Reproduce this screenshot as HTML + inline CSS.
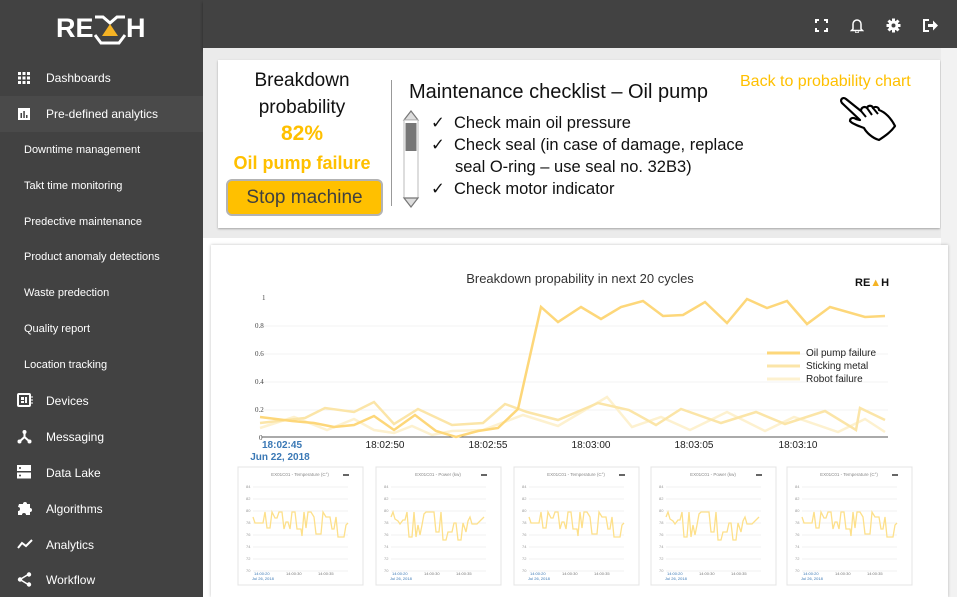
<!DOCTYPE html>
<html><head><meta charset="utf-8"><style>
*{margin:0;padding:0;box-sizing:border-box}
body{width:957px;height:597px;overflow:hidden;background:#fff;font-family:"Liberation Sans",sans-serif;position:relative}
.sb{position:absolute;left:0;top:0;width:203px;height:597px;background:#424242;color:#fff}
.top{position:absolute;left:203px;top:0;width:754px;height:48px;background:#424242;box-shadow:0 2px 3px rgba(0,0,0,.4)}
.it{position:absolute;left:46px;font-size:12px;color:#fff}
.sub{position:absolute;left:24px;font-size:11px;color:#fff}
.ic{position:absolute;left:17px}
.abs{position:absolute}
.cal{font-family:"Liberation Sans",sans-serif}
</style></head><body>
<div class="sb">
  <div class="abs" style="left:56px;top:13px;font-size:27px;font-weight:bold;line-height:30px">RE</div>
  <div class="abs" style="left:126px;top:13px;font-size:27px;font-weight:bold;line-height:30px">H</div>
  <svg class="abs" style="left:94px;top:14px" width="32" height="32" viewBox="0 0 32 32"><path d="M1 3 L9 3 L16 9 L23 3 L31 3" stroke="#fff" stroke-width="3" fill="none"/><path d="M1 21 L7 29 L25 29 L31 21" stroke="#fff" stroke-width="3" fill="none"/><path d="M8 22 L16 10 L24 22Z" fill="#f5b324"/></svg>
  <div class="abs" style="left:0;top:96px;width:203px;height:36px;background:#4a4a4a"></div>
  <svg class="ic" style="top:71px" width="14" height="14"><g fill="#fff"><rect x="1" y="1" width="3" height="3"/><rect x="5.5" y="1" width="3" height="3"/><rect x="10" y="1" width="3" height="3"/><rect x="1" y="5.5" width="3" height="3"/><rect x="5.5" y="5.5" width="3" height="3"/><rect x="10" y="5.5" width="3" height="3"/><rect x="1" y="10" width="3" height="3"/><rect x="5.5" y="10" width="3" height="3"/><rect x="10" y="10" width="3" height="3"/></g></svg>
  <div class="it" style="top:71px">Dashboards</div>
  <svg class="ic" style="top:107px" width="14" height="14"><rect x="1" y="1" width="12" height="12" fill="#fff"/><g fill="#424242"><rect x="3.5" y="6" width="1.5" height="5"/><rect x="6.3" y="4" width="1.5" height="7"/><rect x="9" y="8" width="1.5" height="3"/></g></svg>
  <div class="it" style="top:107px">Pre-defined analytics</div>
  <div class="sub" style="top:144px">Downtime management</div>
  <div class="sub" style="top:180px">Takt time monitoring</div>
  <div class="sub" style="top:216px">Predective maintenance</div>
  <div class="sub" style="top:251px">Product anomaly detections</div>
  <div class="sub" style="top:287px">Waste predection</div>
  <div class="sub" style="top:323px">Quality report</div>
  <div class="sub" style="top:359px">Location tracking</div>
  <svg class="ic" style="top:393px" width="16" height="14"><rect x="1" y="1" width="12" height="12" rx="1" fill="none" stroke="#fff" stroke-width="2"/><rect x="4" y="4" width="3" height="3" fill="#fff"/><rect x="8" y="4" width="2" height="6" fill="#fff"/><rect x="4" y="8" width="3" height="2" fill="#fff"/><path d="M14 4h2M14 7h2M14 10h2" stroke="#fff"/></svg>
  <div class="it" style="top:394px">Devices</div>
  <svg class="ic" style="top:429px" width="15" height="15"><path d="M7.5 2V8L2 13M7.5 8L13 13" stroke="#fff" stroke-width="2" fill="none"/><circle cx="7.5" cy="3" r="2" fill="#fff"/><circle cx="2.5" cy="12.5" r="2" fill="#fff"/><circle cx="12.5" cy="12.5" r="2" fill="#fff"/></svg>
  <div class="it" style="top:430px">Messaging</div>
  <svg class="ic" style="top:465px" width="14" height="14"><rect x="0" y="0" width="14" height="6" fill="#fff"/><rect x="0" y="7.5" width="14" height="6" fill="#fff"/><circle cx="3" cy="3" r="1" fill="#424242"/><circle cx="3" cy="10.5" r="1" fill="#424242"/></svg>
  <div class="it" style="top:466px">Data Lake</div>
  <svg class="ic" style="top:500px" width="16" height="16"><path d="M2 4h4a2 2 0 1 1 4 0h3v4a2 2 0 1 1 0 4v3H9a2 2 0 1 0-4 0H1v-4a2 2 0 1 0 0-4z" fill="#fff"/></svg>
  <div class="it" style="top:502px">Algorithms</div>
  <svg class="ic" style="top:538px" width="16" height="12"><path d="M1 10L5 5L9 8L15 2" stroke="#fff" stroke-width="2" fill="none"/></svg>
  <div class="it" style="top:538px">Analytics</div>
  <svg class="ic" style="top:572px" width="15" height="15"><path d="M12 2L3 7.5L12 13" stroke="#fff" stroke-width="1.5" fill="none"/><circle cx="12" cy="2.5" r="2.2" fill="#fff"/><circle cx="3" cy="7.5" r="2.2" fill="#fff"/><circle cx="12" cy="12.5" r="2.2" fill="#fff"/></svg>
  <div class="it" style="top:573px">Workflow</div>
</div>
<div class="top">
  <svg class="abs" style="left:612px;top:19px" width="13" height="13"><path d="M1 4V1h3M9 1h3v3M12 9v3H9M4 12H1V9" stroke="#fff" stroke-width="2" fill="none"/></svg>
  <svg class="abs" style="left:647px;top:18px" width="14" height="15"><path d="M3 11V6a4 4 0 0 1 8 0v5l1.5 1.5h-11z" stroke="#fff" stroke-width="1.5" fill="none"/><path d="M5.5 13.5a1.5 1.5 0 0 0 3 0" stroke="#fff" fill="none"/></svg>
  <svg class="abs" style="left:683px;top:18px" width="15" height="15" viewBox="0 0 15 15"><circle cx="7.5" cy="7.5" r="5" fill="#fff"/><g stroke="#fff" stroke-width="3"><path d="M7.5 0.5v14M0.5 7.5h14M2.5 2.5l10 10M12.5 2.5l-10 10"/></g><circle cx="7.5" cy="7.5" r="2" fill="#424242"/></svg>
  <svg class="abs" style="left:720px;top:19px" width="16" height="13"><path d="M6 1H1v11h5" stroke="#fff" stroke-width="2" fill="none"/><path d="M5 5h5V1.5l5 5-5 5V8H5z" fill="#fff"/></svg>
</div>
<div class="abs" style="left:203px;top:48px;width:754px;height:190px;background:#ebebeb"></div>
<div class="abs" style="left:218px;top:60px;width:722px;height:168px;background:#fff;box-shadow:0 1px 2px rgba(0,0,0,.3)"></div>
<div class="abs" style="left:941px;top:48px;width:16px;height:549px;background:#f2f2f2"></div>
<div class="abs cal" style="left:218px;top:67px;width:168px;text-align:center;font-size:19px;line-height:27px;color:#111">Breakdown<br>probability</div>
<div class="abs" style="left:218px;top:122px;width:168px;text-align:center;font-size:21px;font-weight:bold;color:#ffc000">82%</div>
<div class="abs" style="left:218px;top:153px;width:168px;text-align:center;font-size:18px;font-weight:bold;color:#ffc000">Oil pump failure</div>
<div class="abs" style="left:226px;top:179px;width:157px;height:37px;background:#ffc000;border:2px solid #b3b3b3;border-radius:6px;text-align:center;font-size:19px;line-height:33px;color:#404040">Stop machine</div>
<div class="abs" style="left:391px;top:80px;width:1px;height:126px;background:#999"></div>
<div class="abs" style="left:409px;top:81px;font-size:20px;color:#111">Maintenance checklist – Oil pump</div>
<svg class="abs" style="left:402px;top:110px" width="18" height="100"><path d="M2 10L9 1L16 10Z" fill="#ddd" stroke="#777" stroke-width="1.2"/><rect x="2" y="10" width="14" height="78" fill="#fff" stroke="#bbb"/><rect x="3.5" y="13" width="11" height="28" fill="#777"/><path d="M2 88L9 97L16 88Z" fill="#ddd" stroke="#777" stroke-width="1.2"/></svg>
<div class="abs" style="left:431px;top:112px;font-size:16.5px;line-height:22px;color:#111">
<div>✓&nbsp; Check main oil pressure</div>
<div>✓&nbsp; Check seal (in case of damage, replace</div>
<div style="padding-left:24px">seal O-ring – use seal no. 32B3)</div>
<div>✓&nbsp; Check motor indicator</div>
</div>
<div class="abs" style="left:740px;top:73px;font-size:16px;color:#ffc000">Back to probability chart</div>
<svg class="abs" style="left:835px;top:95px" width="66" height="50" viewBox="0 0 66 50"><path d="M8 9c-4-3-1-8 3-5l15 12c0-4 4-5 6-3c1-3 5-3 6 0c2-2 6-1 6 2c6 2 12 8 16 16c-4 6-10 10-16 14c-7-2-13-8-15-12c-5-2-12-4-14-7c0-3 3-4 6-2l4 1z" fill="#fff" stroke="#000" stroke-width="2.2" stroke-linejoin="round"/><path d="M26 16l5 6M32 13l5 7M38 13l5 6" stroke="#000" stroke-width="2" fill="none"/></svg>
<div class="abs" style="left:211px;top:245px;width:737px;height:352px;background:#fff;box-shadow:0 0 3px rgba(0,0,0,.25)"></div>
<svg class="abs" style="left:0;top:0" width="957" height="597">
<text x="580" y="283" font-size="13" text-anchor="middle" fill="#333" font-family="Liberation Sans">Breakdown propability in next 20 cycles</text>
<text x="855" y="286" font-size="11" font-weight="bold" fill="#111" font-family="Liberation Sans">RE<tspan fill="#f5b324">▲</tspan>H</text>
<g stroke="#f3f3f3"><path d="M262 326H888M262 354H888M262 382H888M262 410H888"/></g>
<path d="M262 437H888" stroke="#555" stroke-width="1"/>
<g font-size="7" fill="#444" font-family="Liberation Serif"><text x="262" y="300">1</text><text x="255" y="328">0.8</text><text x="255" y="356">0.6</text><text x="255" y="384">0.4</text><text x="255" y="412">0.2</text><text x="259" y="440">0</text></g>
<g font-size="10" fill="#222" font-family="Liberation Sans" text-anchor="middle"><text x="385" y="448">18:02:50</text><text x="488" y="448">18:02:55</text><text x="591" y="448">18:03:00</text><text x="694" y="448">18:03:05</text><text x="798" y="448">18:03:10</text></g>
<text x="282" y="448" font-size="10" fill="#3a78b5" font-weight="bold" text-anchor="middle">18:02:45</text>
<text x="280" y="460" font-size="10" fill="#3a78b5" font-weight="bold" text-anchor="middle">Jun 22, 2018</text>
<polyline fill="none" stroke="#fdf1cf" stroke-width="2.5" points="260,428 294,417 327,430 354,419 374,430 394,433 412,426 432,435 452,431 483,430 523,415 558,426 607,397 632,427 661,417 690,430 727,412 765,431 794,417 838,432 865,419 885,432"/>
<polyline fill="none" stroke="#fbe5a8" stroke-width="2.5" points="260,423 305,418 325,408 354,412 374,402 394,424 418,409 452,425 483,423 505,404 527,412 558,420 598,403 629,410 656,425 681,409 721,423 756,412 785,424 825,411 856,430 860,408 885,420"/>
<polyline fill="none" stroke="#fdd77a" stroke-width="2.5" points="260,417 292,421 314,423 334,427 354,425 374,416 394,430 415,415 436,431 456,437 478,431 498,428 518,409 541,307 558,322 581,307 601,319 621,307 643,301 663,316 683,315 705,302 727,323 747,299 767,308 787,301 807,324 830,307 865,317 885,316"/>
<path d="M767 353H800" stroke="#fdd77a" stroke-width="3"/><path d="M767 366H800" stroke="#fbe5a8" stroke-width="3"/><path d="M767 379H800" stroke="#fdf1cf" stroke-width="3"/>
<g font-size="10" fill="#222" font-family="Liberation Sans"><text x="806" y="356">Oil pump failure</text><text x="806" y="369">Sticking metal</text><text x="806" y="382">Robot failure</text></g>
<defs><g id="card">
<rect x="0" y="0" width="125" height="118" fill="#fff" stroke="#e4e4e4"/>
<g stroke="#f2f2f2"><path d="M15 20H110M15 32H110M15 44H110M15 56H110M15 68H110M15 80H110M15 92H110M15 104H110"/></g>
<g font-size="4" fill="#999"><text x="8" y="21">84</text><text x="8" y="33">82</text><text x="8" y="45">80</text><text x="8" y="57">78</text><text x="8" y="69">76</text><text x="8" y="81">74</text><text x="8" y="93">72</text><text x="8" y="105">70</text></g>
<g font-size="4" fill="#3a78b5"><text x="16" y="108">14:00:20</text><text x="14" y="113">Jul 26, 2018</text></g>
<g font-size="4" fill="#777"><text x="48" y="108">14:00:30</text><text x="80" y="108">14:00:35</text></g>
<rect x="105" y="7" width="6" height="2" fill="#666"/>
</g></defs>
<g transform="translate(238,467)"><use href="#card"/><text x="62" y="9" font-size="4.5" fill="#888" text-anchor="middle">EX01C01 - Temperature (C°)</text><polyline fill="none" stroke="#fde08a" stroke-width="1.3" points="15,50 17,56 25,56 27,45 29,61 32,61 34,45 37,51 39,51 41,45 44,45 46,62 48,55 50,55 52,62 54,45 57,45 59,62 63,62 64,69 66,45 68,61 70,45 73,45 76,50 78,67 83,67 85,45 88,50 92,50 94,62 96,62 98,50 100,70 104,70 106,70 108,58 110,56"/></g>
<g transform="translate(376,467)"><use href="#card"/><text x="62" y="9" font-size="4.5" fill="#888" text-anchor="middle">EX01C01 - Power (kw)</text><polyline fill="none" stroke="#fde08a" stroke-width="1.3" points="15,50 17,45 19,52 22,54 24,57 27,53 29,53 31,45 33,70 36,70 38,45 40,70 42,58 44,68 46,58 48,47 50,45 58,45 60,65 63,65 65,45 67,73 70,73 72,65 76,65 78,56 80,56 82,73 85,73 87,56 90,65 92,54 94,50 96,57 101,57 105,53 108,50"/></g>
<g transform="translate(514,467)"><use href="#card"/><text x="62" y="9" font-size="4.5" fill="#888" text-anchor="middle">EX01C01 - Temperature (C°)</text><polyline fill="none" stroke="#fde08a" stroke-width="1.3" points="15,50 17,56 25,56 27,45 29,61 32,61 34,45 37,51 39,51 41,45 44,45 46,62 48,55 50,55 52,62 54,45 57,45 59,62 63,62 64,69 66,45 68,61 70,45 73,45 76,50 78,67 83,67 85,45 88,50 92,50 94,62 96,62 98,50 100,70 104,70 106,70 108,58 110,56"/></g>
<g transform="translate(651,467)"><use href="#card"/><text x="62" y="9" font-size="4.5" fill="#888" text-anchor="middle">EX01C01 - Power (kw)</text><polyline fill="none" stroke="#fde08a" stroke-width="1.3" points="15,50 17,45 19,52 22,54 24,57 27,53 29,53 31,45 33,70 36,70 38,45 40,70 42,58 44,68 46,58 48,47 50,45 58,45 60,65 63,65 65,45 67,73 70,73 72,65 76,65 78,56 80,56 82,73 85,73 87,56 90,65 92,54 94,50 96,57 101,57 105,53 108,50"/></g>
<g transform="translate(787,467)"><use href="#card"/><text x="62" y="9" font-size="4.5" fill="#888" text-anchor="middle">EX01C01 - Temperature (C°)</text><polyline fill="none" stroke="#fde08a" stroke-width="1.3" points="15,50 17,56 25,56 27,45 29,61 32,61 34,45 37,51 39,51 41,45 44,45 46,62 48,55 50,55 52,62 54,45 57,45 59,62 63,62 64,69 66,45 68,61 70,45 73,45 76,50 78,67 83,67 85,45 88,50 92,50 94,62 96,62 98,50 100,70 104,70 106,70 108,58 110,56"/></g>
</svg>
</body></html>
